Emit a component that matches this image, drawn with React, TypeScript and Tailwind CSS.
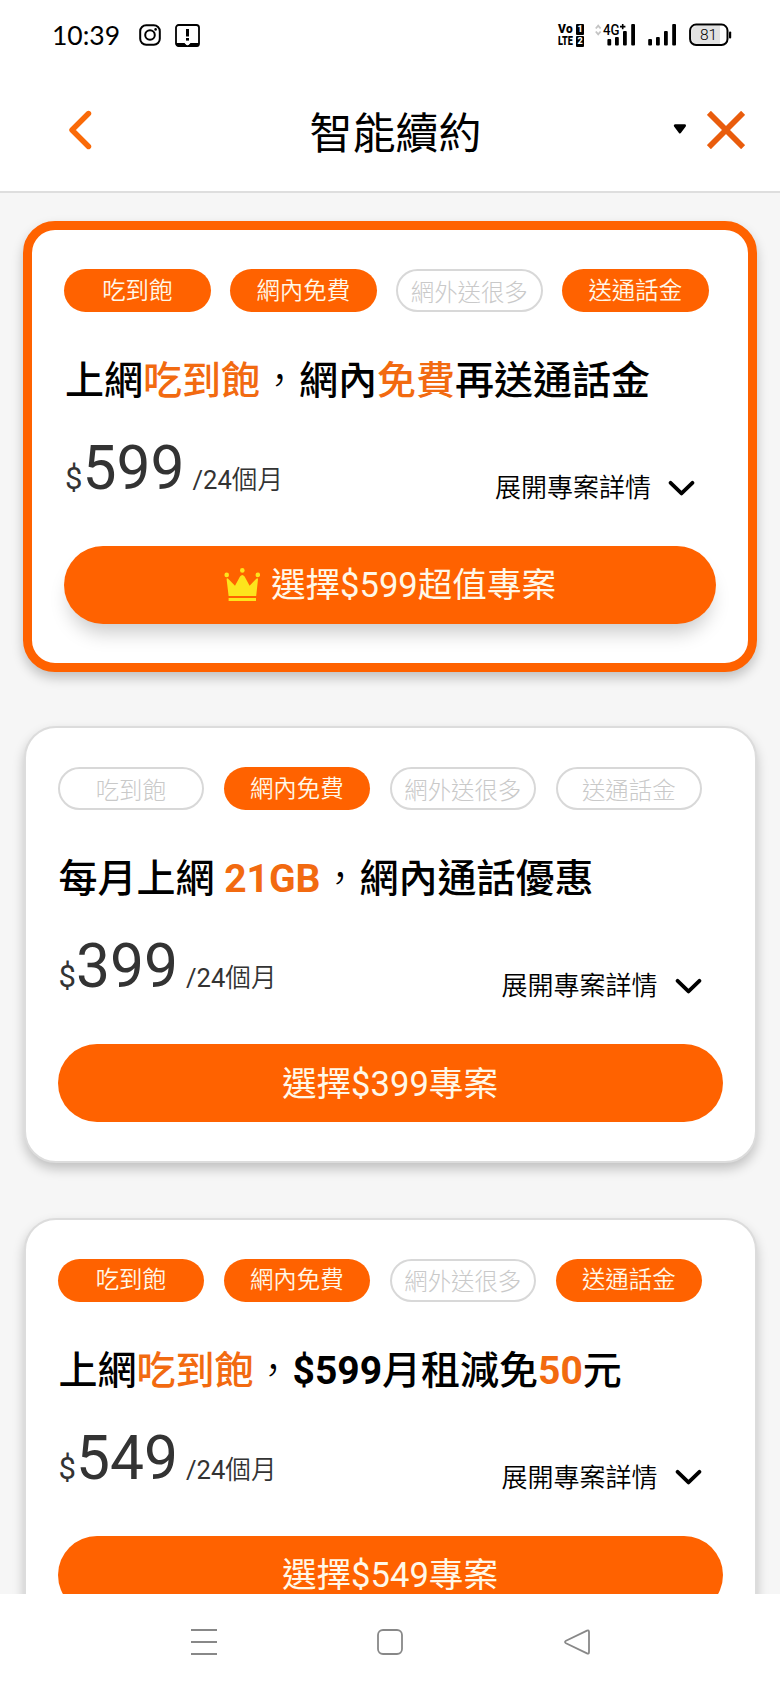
import React from 'react';
import clsx from 'clsx';

interface Tag {
  label: string;
  active: boolean;
}

interface TitlePart {
  text: string;
  highlight?: boolean;
  latin?: boolean;
}

interface Plan {
  id: number;
  tags: Tag[];
  title: TitlePart[];
  price: number;
  cta: string;
  featured?: boolean;
}

const tagNames = ['吃到飽', '網內免費', '網外送很多', '送通話金'];

const makeTags = (active: number[]): Tag[] =>
  tagNames.map((label, i) => ({ label, active: active.includes(i) }));

const plans: Plan[] = [
  {
    id: 1,
    tags: makeTags([0, 1, 3]),
    title: [
      { text: '上網' },
      { text: '吃到飽', highlight: true },
      { text: '，' },
      { text: '網內' },
      { text: '免費', highlight: true },
      { text: '再送通話金' },
    ],
    price: 599,
    cta: '選擇$599超值專案',
    featured: true,
  },
  {
    id: 2,
    tags: makeTags([1]),
    title: [
      { text: '每月上網 ' },
      { text: '21GB', highlight: true, latin: true },
      { text: '，' },
      { text: '網內通話優惠' },
    ],
    price: 399,
    cta: '選擇$399專案',
  },
  {
    id: 3,
    tags: makeTags([0, 1, 3]),
    title: [
      { text: '上網' },
      { text: '吃到飽', highlight: true },
      { text: '，' },
      { text: '$599', latin: true },
      { text: '月租減免' },
      { text: '50', highlight: true, latin: true },
      { text: '元' },
    ],
    price: 549,
    cta: '選擇$549專案',
  },
];

const Crown = () => (
  <svg width="36" height="34" viewBox="0 0 36 34" fill="#fde41c">
    <circle cx="2.7" cy="6.9" r="2.3" />
    <circle cx="18.3" cy="2.4" r="2.3" />
    <circle cx="33.8" cy="6.9" r="2.3" />
    <path d="M2.6 11.2 Q2.8 9.6 4.4 11 L11 17.8 L16 8.6 Q18.3 5.4 20.6 8.6 L25.6 17.8 L32 11 Q33.8 9.6 34 11.2 L32.2 28 H4.6 Z" />
    <rect x="4.6" y="30" width="27.4" height="3" />
  </svg>
);

const StatusBar = () => (
  <div className="flex h-[70px] items-center justify-between pl-[52px] pr-[48px]">
    <div className="flex items-center">
      <span className="w-[66px] whitespace-nowrap font-[Lato,sans-serif] text-[26.5px] leading-none">10:39</span>
      <svg className="ml-[21px]" width="22" height="22" viewBox="0 0 22 22" fill="none" stroke="#000" strokeWidth="2">
        <rect x="1.2" y="1.2" width="19.6" height="19.6" rx="6" />
        <circle cx="11" cy="11" r="4.8" />
        <circle cx="16.6" cy="5.4" r="1.3" fill="#000" stroke="none" />
      </svg>
      <svg className="ml-[14px]" width="25" height="23" viewBox="0 0 25 23">
        <rect x="1" y="1" width="23" height="21" rx="2.6" fill="none" stroke="#000" strokeWidth="1.8" />
        <path d="M1 19 H9.5 L12.5 22 L15.5 19 H24 V20.5 Q24 22.8 21.5 22.8 H3.5 Q1 22.8 1 20.5 Z" fill="#000" />
        <path d="M9.6 18.6 L12.5 21.4 L15.4 18.6 Z" fill="#fff" />
        <rect x="11" y="5" width="3" height="7.5" fill="#000" />
        <rect x="11" y="14" width="3" height="2.6" fill="#000" />
      </svg>
    </div>

    <div className="flex items-center">
      <div className="flex gap-[2px] font-black">
        <div className="flex w-[16px] flex-col items-start text-[12px] leading-[12px]">
          <span className="tracking-[0.4px]">Vo</span>
          <span className="origin-left scale-x-[0.76]">LTE</span>
        </div>
        <div className="flex flex-col gap-px pt-px text-[9px] leading-[11px] text-white">
          <span className="w-[8px] rounded-[1px] bg-black text-center">1</span>
          <span className="w-[8px] rounded-[1px] bg-black text-center">2</span>
        </div>
      </div>
      <svg className="ml-[11px]" width="41" height="24" viewBox="0 0 41 24">
        <path d="M0.8 5.5 L3.2 2.6 L5.6 5.5 M0.8 8.5 L3.2 11.4 L5.6 8.5" fill="none" stroke="#c4c4c4" strokeWidth="1.8" />
        <text x="8" y="11.6" fontSize="14.5" fontWeight="500" textLength="16.5" lengthAdjust="spacingAndGlyphs">4G</text>
        <path d="M25 3.6 H30.4 M27.7 0.9 V6.3" stroke="#000" strokeWidth="1.6" />
        <rect x="12.4" y="16" width="3.8" height="6.6" rx="1" />
        <rect x="20" y="14" width="3.8" height="8.6" rx="1" />
        <rect x="28" y="8" width="3.8" height="14.6" rx="1" />
        <rect x="36.2" y="1" width="3.8" height="21.6" rx="1" />
      </svg>
      <svg className="ml-[12px]" width="29" height="24" viewBox="0 0 29 24">
        <rect x="0.2" y="16" width="3.8" height="6.6" rx="1" />
        <rect x="8" y="14" width="3.8" height="8.6" rx="1" />
        <rect x="16" y="8" width="3.8" height="14.6" rx="1" />
        <rect x="24.2" y="1" width="3.8" height="21.6" rx="1" />
      </svg>
      <svg className="ml-[12px]" width="43" height="24" viewBox="0 0 43 24">
        <path d="M8 3 H31 V21 H8 Q3 21 3 16 V8 Q3 3 8 3 Z" fill="#e2e2e2" />
        <rect x="1.1" y="1.6" width="37.4" height="20.4" rx="6" fill="none" stroke="#000" strokeWidth="2" />
        <rect x="40" y="8.4" width="2.2" height="7" rx="1" />
        <text x="19.6" y="17.3" fontSize="15.5" fontWeight="300" textAnchor="middle">81</text>
      </svg>
    </div>
  </div>
);

const Header = () => (
  <header className="flex h-[123px] items-center justify-between border-b-2 border-[#dedede] pb-[2px] pl-[68px] pr-[35px]">
    <svg width="24" height="40" viewBox="0 0 24 40" fill="none" stroke="#fa6a08" strokeWidth="5.4" strokeLinecap="round" strokeLinejoin="round">
      <path d="M20.5 3.5 L4 20 L20.5 36.5" />
    </svg>
    <h1 className="ml-[26px] whitespace-nowrap pt-[9px] text-center text-[43px] leading-none">智能續約</h1>
    <div className="flex items-center justify-end">
      <svg className="mt-[-2px]" width="14" height="12" viewBox="0 0 14 12" stroke="#000" strokeWidth="2.8" strokeLinejoin="round">
        <path d="M2.2 2.6 H11.6 L6.9 9 Z" />
      </svg>
      <svg className="ml-[20px]" width="38" height="38" viewBox="0 0 37 37" stroke="#e95c0c" strokeWidth="5.6">
        <path d="M1.8 1.8 L35.2 35.2 M35.2 1.8 L1.8 35.2" />
      </svg>
    </div>
  </header>
);

const PlanCard = ({ plan }: { plan: Plan }) => (
  <section
    className={clsx(
      'mx-auto rounded-[32px] bg-white px-[32px] py-[39px] shadow-[0_6px_12px_rgba(0,0,0,0.22)]',
      plan.featured ? 'w-[734px] border-[9px] border-[#ff6200]' : 'w-[733px] border-2 border-[#dcdcdc]'
    )}
  >
    <div className="flex gap-[19.5px]">
      {plan.tags.map((tag) => (
        <span
          key={tag.label}
          className={clsx(
            'flex h-[43px] w-[146.5px] items-center justify-center whitespace-nowrap rounded-full text-[23.4px] leading-none',
            tag.active
              ? 'bg-[#ff6200] pt-[2px] text-[#fff8e8] [font-weight:350]'
              : 'border-2 border-[#d8d8d8] pt-[6px] font-light text-[#c9c9c9]'
          )}
        >
          {tag.label}
        </span>
      ))}
    </div>

    <h2 className="mt-[40px] whitespace-pre pl-[1px] text-[39px] font-medium leading-[59px]">
      {plan.title.map((part) => (
        <span
          key={part.text}
          className={clsx(
            part.highlight && 'text-[#f26a10]',
            part.latin && 'font-bold',
            part.text === '，' && 'font-light'
          )}
        >
          {part.text}
        </span>
      ))}
    </h2>

    <div className="flex h-[135px] items-start justify-between pr-[21px]">
      <div className="flex items-baseline pl-px pt-[28px] text-[#333]">
        <span className="text-[31px] leading-none">$</span>
        <span className="text-[60.5px] leading-none">{plan.price}</span>
        <span className="ml-[8px] text-[25.6px] leading-none">
          /24<span className="[font-weight:350]">個月</span>
        </span>
      </div>
      <button className="flex items-center gap-[17px] pt-[63px] text-[26px] leading-[28px] [font-weight:350]">
        展開專案詳情
        <svg width="27" height="17" viewBox="0 0 27 17" fill="none" stroke="#000" strokeWidth="3.8" strokeLinecap="round" strokeLinejoin="round">
          <path d="M2.6 2.8 L13.5 13.4 L24.4 2.8" />
        </svg>
      </button>
    </div>

    <button
      className={clsx(
        'flex h-[78px] w-full items-center justify-center gap-[11px] rounded-full bg-[#ff6200] text-[34.6px] leading-none text-[#fff8e8]',
        plan.featured && 'shadow-[0_14px_20px_-6px_rgba(0,0,0,0.22)]'
      )}
    >
      {plan.featured && <Crown />}
      <span className="pt-px">{plan.cta}</span>
    </button>
  </section>
);

const NavBar = () => (
  <nav className="flex h-[96px] items-center justify-between bg-white px-[189.5px]">
    <svg width="28" height="28" viewBox="0 0 28 28" stroke="#888" strokeWidth="2">
      <path d="M1 2 H27 M1 14 H27 M1 26 H27" />
    </svg>
    <svg width="28" height="28" viewBox="0 0 28 28" fill="none" stroke="#888" strokeWidth="1.8">
      <rect x="2" y="2" width="24" height="24" rx="5" />
    </svg>
    <svg width="28" height="28" viewBox="0 0 28 28" fill="none" stroke="#888" strokeWidth="1.8" strokeLinejoin="round">
      <path d="M24 2.6 Q26 1.6 26 4 V24 Q26 26.4 24 25.4 L3 15.2 Q1 14 3 12.8 Z" />
    </svg>
  </nav>
);

const App = () => {
  return (
    <div className="flex h-[1690px] w-[780px] flex-col overflow-hidden bg-white font-[Roboto,'Noto_Sans_CJK_TC',sans-serif] text-black">
      <StatusBar />
      <Header />
      <main className="flex min-h-0 flex-1 flex-col gap-[54.3px] overflow-hidden bg-[#f6f6f6] pt-[28px]">
        {plans.map((plan) => (
          <PlanCard key={plan.id} plan={plan} />
        ))}
      </main>
      <NavBar />
    </div>
  );
};

export default App;
